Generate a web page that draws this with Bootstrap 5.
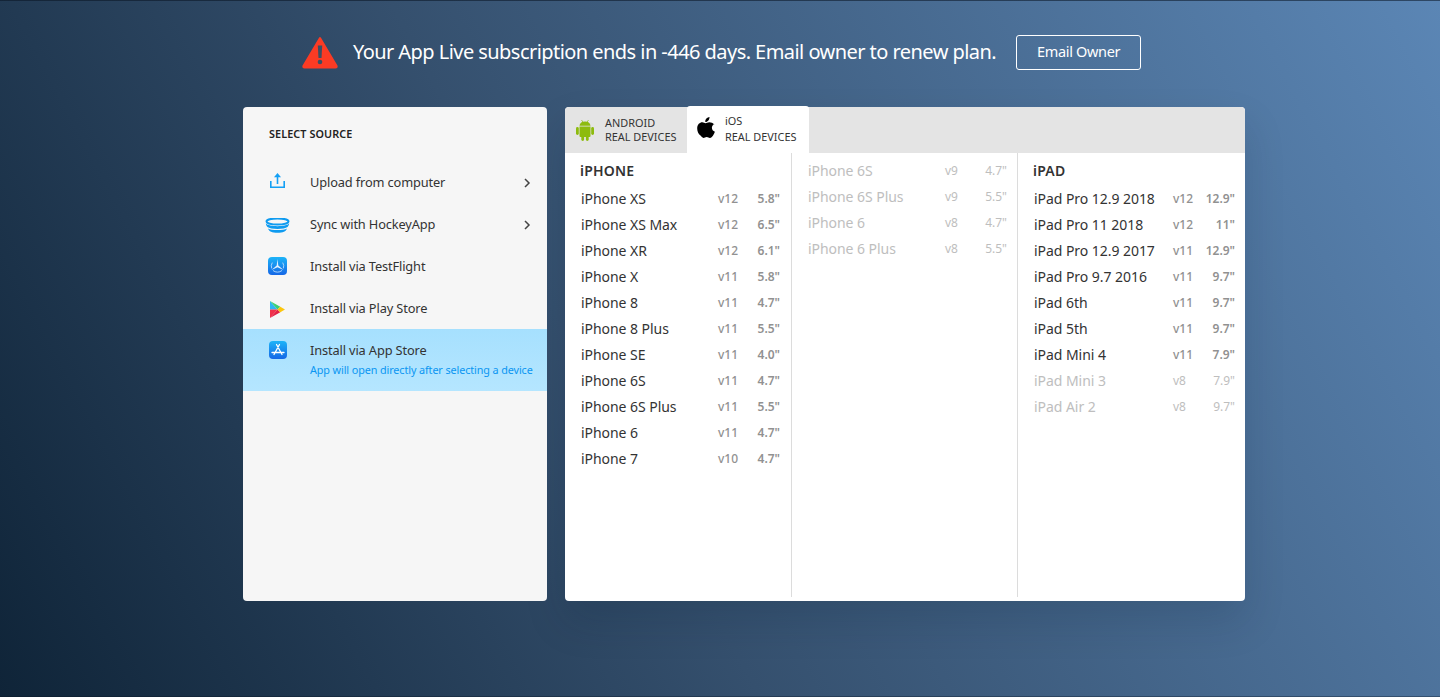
<!DOCTYPE html>
<html lang="en">
<head>
    <meta charset="UTF-8">
    <title>App Live - Select Device</title>
    <link href="https://cdn.jsdelivr.net/npm/bootstrap@5.3.3/dist/css/bootstrap.min.css" rel="stylesheet">
    <style>
        html, body { height: 100%; }
        body {
            font-family: "Noto Sans", "Liberation Sans", sans-serif;
            background: linear-gradient(62deg, #0f2438 0%, #35506e 42%, #5b86b5 100%);
            box-shadow: inset 0 1px rgba(10,20,35,.55), inset 0 -1px rgba(10,20,35,.35);
            color: #333;
            overflow: hidden;
        }
        .expiry-bar { height: 104px; margin-bottom: 3px; padding-left: 3px; gap: 15px; }
        .expiry-text { color: #fff; font-size: 20px; letter-spacing: -0.55px; margin-right: 5px; white-space: nowrap; }
        .btn-owner {
            width: 125px; height: 35px; padding: 0;
            font-size: 14.5px; letter-spacing: -0.35px;
            color: #fff; border: 1px solid #fff; border-radius: 3px;
        }
        .btn-owner:hover { color: #fff; }
        .panels { width: 1002px; height: 494px; gap: 18px; margin-left: 243px; }
        .source-panel { width: 304px; background: #f6f6f6; border-radius: 4px; overflow: hidden; position: relative; z-index: 1; }
        .source-title { font-size: 10.8px; font-weight: 600; color: #222; letter-spacing: .1px; padding: 19px 26px 0; height: 54px; }
        .source-row { height: 42px; padding-top: 2px; font-size: 12.8px; letter-spacing: -.13px; color: #333; }
        .source-row.active-row { height: 62px; padding-top: 0; background: linear-gradient(#a6e0fe, #b5e6ff); }
        .source-icon { width: 67px; flex: none; display: flex; justify-content: center; padding-left: 2px; }
        .source-icon svg { display: block; }
        .icon-up-3 { margin-bottom: 6px; }
        .icon-up-1 { margin-bottom: 2px; }
        .active-icon { padding-top: 12px; }
        .active-label { padding-top: 12px; }
        .source-sub { font-size: 10.8px; color: #0a96f2; letter-spacing: -.1px; margin-top: 2px; white-space: nowrap; }
        .chev { margin-left: auto; margin-right: 16px; }
        .device-panel { flex: 1; background: #fff; border-radius: 4px; box-shadow: 0 20px 40px rgba(10,25,45,.15); }
        .tab-strip { height: 46px; background: #e4e4e4; border-radius: 4px 4px 0 0; }
        .os-tab { font-size: 10.9px; color: #333; }
        .os-android { width: 122px; padding-left: 11px; gap: 11px; line-height: 14px; }
        .os-ios { width: 122px; background: #fff; height: 47px; margin-top: -1px; border-radius: 3px 3px 0 0; padding-left: 10px; gap: 10px; line-height: 16px; }
        .os-ios-label { padding-bottom: 2px; }
        .apple-icon { margin-bottom: 4px; }
        .device-cols { height: 444px; }
        .device-col { height: 100%; padding-left: 15px; padding-right: 11px; }
        .device-col + .device-col { border-left: 1px solid #dcdcdc; }
        .col-phone1 { width: 226px; }
        .col-phone2 { width: 226px; padding-left: 16px; padding-right: 10px; }
        .col-pad { flex: 1; padding-left: 15px; padding-right: 10px; }
        .device-head { font-size: 14px; font-weight: 600; color: #333; height: 33px; line-height: 24px; padding-top: 6px; letter-spacing: .2px; }
        .device-row { height: 26px; line-height: 26px; font-size: 14px; color: #333; letter-spacing: -.05px; padding-left: 1px; white-space: nowrap; }
        .col-phone2 .device-row { padding-left: 0; }
        .device-row .ver { width: 20px; text-align: left; font-size: 12px; font-weight: 500; color: #919191; margin-left: auto; letter-spacing: 0; }
        .device-row .size { width: 42px; text-align: right; font-size: 12px; font-weight: 600; color: #919191; letter-spacing: 0; }
        .device-row.off, .device-row.off .ver, .device-row.off .size { color: #bebebe; font-weight: 400; }
        .spacer-top { height: 5px; }
    </style>
</head>
<body>

<div class="expiry-bar d-flex align-items-center justify-content-center">
    <svg width="36" height="33" viewBox="0 0 36 33">
        <path d="M18 2 L34.600 30 Q35 31.500 33.500 31.500 L2.500 31.500 Q1 31.500 1.400 30 Z" fill="#fb3b24" stroke="#fb3b24" stroke-width="2" stroke-linejoin="round"/>
        <path d="M15.800 9.500 h4.400 l-.7 12.500 h-3 z" fill="#3c4f63"/>
        <circle cx="18" cy="26" r="2.300" fill="#3c4f63"/>
    </svg>
    <span class="expiry-text">Your App Live subscription ends in -446 days. Email owner to renew plan.</span>
    <button type="button" class="btn btn-owner">Email Owner</button>
</div>

<div class="panels d-flex">
    <div class="source-panel">
        <div class="source-title">SELECT SOURCE</div>

        <div class="source-row d-flex align-items-center">
            <div class="source-icon">
                <svg class="icon-up-3" width="15" height="15" viewBox="0 0 15 15" fill="none" stroke="#14a0f5" stroke-width="1.600"><path d="M.8 8v6.200h13.400V8"/><path d="M7.500 11V3"/><path d="M7.500 0 11 4.200H4z" fill="#14a0f5" stroke="none"/></svg>
            </div>
            <span>Upload from computer</span>
            <svg class="chev" width="7" height="10" viewBox="0 0 7 10" fill="none" stroke="#444" stroke-width="1.500"><path d="M1 1l4 4-4 4"/></svg>
        </div>
        <div class="source-row d-flex align-items-center">
            <div class="source-icon">
                <svg width="25" height="15" viewBox="0 0 25 15"><ellipse cx="12.500" cy="3.500" rx="11" ry="3" fill="none" stroke="#0f9bf0" stroke-width="2"/><path d="M.8 5.500c3 3.500 20.400 3.500 23.400 0-.3 1.600-.8 2.700-1.700 3.500-3 2.600-17 2.600-20 0C1.600 8.200 1.100 7.100.8 5.500z" fill="#0f9bf0"/><path d="M3 10.500c3 2 16 2 19 0-1 3-4 4.300-9.500 4.300S4 13.500 3 10.500z" fill="#0f9bf0"/></svg>
            </div>
            <span>Sync with HockeyApp</span>
            <svg class="chev" width="7" height="10" viewBox="0 0 7 10" fill="none" stroke="#444" stroke-width="1.500"><path d="M1 1l4 4-4 4"/></svg>
        </div>
        <div class="source-row d-flex align-items-center">
            <div class="source-icon">
                <svg class="icon-up-1" width="19" height="18" viewBox="0 0 19 18"><defs><linearGradient id="tf" x1="0" y1="0" x2="0" y2="1"><stop offset="0" stop-color="#1db4f8"/><stop offset="1" stop-color="#1567e6"/></linearGradient></defs><rect width="19" height="18" rx="4" fill="url(#tf)"/><g fill="none" stroke="#cfe8ff" stroke-width=".8"><path d="M4.300 5.600a6.500 6.500 0 0 0-.6 5.800M14.700 5.600a6.500 6.500 0 0 1 .6 5.800M5 13.500a7 7 0 0 0 9 0"/></g><path d="M9.500 2 10.300 8.500 15.500 13 9.500 10.200 3.500 13 8.700 8.500z" fill="#e3f2ff"/></svg>
            </div>
            <span>Install via TestFlight</span>
        </div>
        <div class="source-row d-flex align-items-center">
            <div class="source-icon">
                <svg width="15" height="17" viewBox="0 0 15 17"><path d="M0 0v8.500h7.500z" fill="#2fb5f2"/><path d="M0 0l7.500 8.500 2.800-2.800z" fill="#3dcf73"/><path d="M0 17V8.500h7.500z" fill="#f0304a"/><path d="M0 17l7.500-8.500 2.800 2.800z" fill="#e32145"/><path d="M10.300 5.700 15 8.500l-4.700 2.800-2.800-2.800z" fill="#fcc60c"/></svg>
            </div>
            <span>Install via Play Store</span>
        </div>
        <div class="source-row active-row d-flex">
            <div class="source-icon active-icon">
                <svg width="18" height="18" viewBox="0 0 18 18"><defs><linearGradient id="as" x1="0" y1="0" x2="0" y2="1"><stop offset="0" stop-color="#1db4f8"/><stop offset="1" stop-color="#1567e6"/></linearGradient></defs><rect width="18" height="18" rx="4" fill="url(#as)"/><g fill="none" stroke="#fff" stroke-width="1.300" stroke-linecap="round"><path d="M10.500 3.500 5 13.500M7.500 3.500 13 13.500M3 11.500h12"/></g></svg>
            </div>
            <div class="active-label">
                <div>Install via App Store</div>
                <div class="source-sub">App will open directly after selecting a device</div>
            </div>
        </div>
    </div>

    <div class="device-panel">
        <div class="tab-strip d-flex">
            <div class="os-tab os-android d-flex align-items-center">
                <svg width="18" height="21" viewBox="0 0 18 21" fill="#8dbb0e"><rect x="0" y="7" width="2.800" height="8" rx="1.400"/><rect x="15.200" y="7" width="2.800" height="8" rx="1.400"/><path d="M3.500 6.500h11V16a1 1 0 0 1-1 1h-9a1 1 0 0 1-1-1z"/><path d="M3.500 5.800C3.700 3 6 1.500 9 1.500s5.300 1.500 5.500 4.300z"/><rect x="5.300" y="16" width="2.800" height="5" rx="1.400"/><rect x="9.900" y="16" width="2.800" height="5" rx="1.400"/><path d="M5.500 0l1.700 2.500M12.500 0l-1.700 2.500" stroke="#8dbb0e" stroke-width=".7"/></svg>
                <div>ANDROID<br>REAL DEVICES</div>
            </div>
            <div class="os-tab os-ios d-flex align-items-center">
                <svg class="apple-icon" width="18" height="21" viewBox="0 0 18 21" fill="#000"><path d="M12.500 0c.1 1.300-.4 2.500-1.100 3.400-.8.900-1.900 1.600-3.100 1.500-.2-1.200.4-2.500 1.100-3.300C10.200.7 11.500.1 12.500 0z"/><path d="M17.200 7c-1.500 1-2.300 2.200-2.300 3.800 0 1.900 1.100 3.300 3 4-.5 1.400-1.100 2.700-2 3.900-.8 1.100-1.700 2.200-3 2.200s-1.700-.8-3.200-.8-2 .8-3.200.8-2.100-1.100-3-2.300C1.300 16.800.2 14 .2 11.400c0-4 2.600-6.100 5.100-6.100 1.300 0 2.500.9 3.300.9s2.100-1 3.600-1c1.900 0 3.800.7 5 2.300z"/></svg>
                <div class="os-ios-label">iOS<br>REAL DEVICES</div>
            </div>
        </div>
        <div class="device-cols d-flex">
            <div class="device-col col-phone1">
                <div class="device-head">iPHONE</div>
                <div class="device-row d-flex"><span>iPhone XS</span><span class="ver">v12</span><span class="size">5.8"</span></div>
                <div class="device-row d-flex"><span>iPhone XS Max</span><span class="ver">v12</span><span class="size">6.5"</span></div>
                <div class="device-row d-flex"><span>iPhone XR</span><span class="ver">v12</span><span class="size">6.1"</span></div>
                <div class="device-row d-flex"><span>iPhone X</span><span class="ver">v11</span><span class="size">5.8"</span></div>
                <div class="device-row d-flex"><span>iPhone 8</span><span class="ver">v11</span><span class="size">4.7"</span></div>
                <div class="device-row d-flex"><span>iPhone 8 Plus</span><span class="ver">v11</span><span class="size">5.5"</span></div>
                <div class="device-row d-flex"><span>iPhone SE</span><span class="ver">v11</span><span class="size">4.0"</span></div>
                <div class="device-row d-flex"><span>iPhone 6S</span><span class="ver">v11</span><span class="size">4.7"</span></div>
                <div class="device-row d-flex"><span>iPhone 6S Plus</span><span class="ver">v11</span><span class="size">5.5"</span></div>
                <div class="device-row d-flex"><span>iPhone 6</span><span class="ver">v11</span><span class="size">4.7"</span></div>
                <div class="device-row d-flex"><span>iPhone 7</span><span class="ver">v10</span><span class="size">4.7"</span></div>
            </div>
            <div class="device-col col-phone2">
                <div class="spacer-top"></div>
                <div class="device-row off d-flex"><span>iPhone 6S</span><span class="ver">v9</span><span class="size">4.7"</span></div>
                <div class="device-row off d-flex"><span>iPhone 6S Plus</span><span class="ver">v9</span><span class="size">5.5"</span></div>
                <div class="device-row off d-flex"><span>iPhone 6</span><span class="ver">v8</span><span class="size">4.7"</span></div>
                <div class="device-row off d-flex"><span>iPhone 6 Plus</span><span class="ver">v8</span><span class="size">5.5"</span></div>
            </div>
            <div class="device-col col-pad">
                <div class="device-head">iPAD</div>
                <div class="device-row d-flex"><span>iPad Pro 12.9 2018</span><span class="ver">v12</span><span class="size">12.9"</span></div>
                <div class="device-row d-flex"><span>iPad Pro 11 2018</span><span class="ver">v12</span><span class="size">11"</span></div>
                <div class="device-row d-flex"><span>iPad Pro 12.9 2017</span><span class="ver">v11</span><span class="size">12.9"</span></div>
                <div class="device-row d-flex"><span>iPad Pro 9.7 2016</span><span class="ver">v11</span><span class="size">9.7"</span></div>
                <div class="device-row d-flex"><span>iPad 6th</span><span class="ver">v11</span><span class="size">9.7"</span></div>
                <div class="device-row d-flex"><span>iPad 5th</span><span class="ver">v11</span><span class="size">9.7"</span></div>
                <div class="device-row d-flex"><span>iPad Mini 4</span><span class="ver">v11</span><span class="size">7.9"</span></div>
                <div class="device-row off d-flex"><span>iPad Mini 3</span><span class="ver">v8</span><span class="size">7.9"</span></div>
                <div class="device-row off d-flex"><span>iPad Air 2</span><span class="ver">v8</span><span class="size">9.7"</span></div>
            </div>
        </div>
    </div>
</div>

<script src="https://cdn.jsdelivr.net/npm/bootstrap@5.3.3/dist/js/bootstrap.bundle.min.js"></script>
</body>
</html>
